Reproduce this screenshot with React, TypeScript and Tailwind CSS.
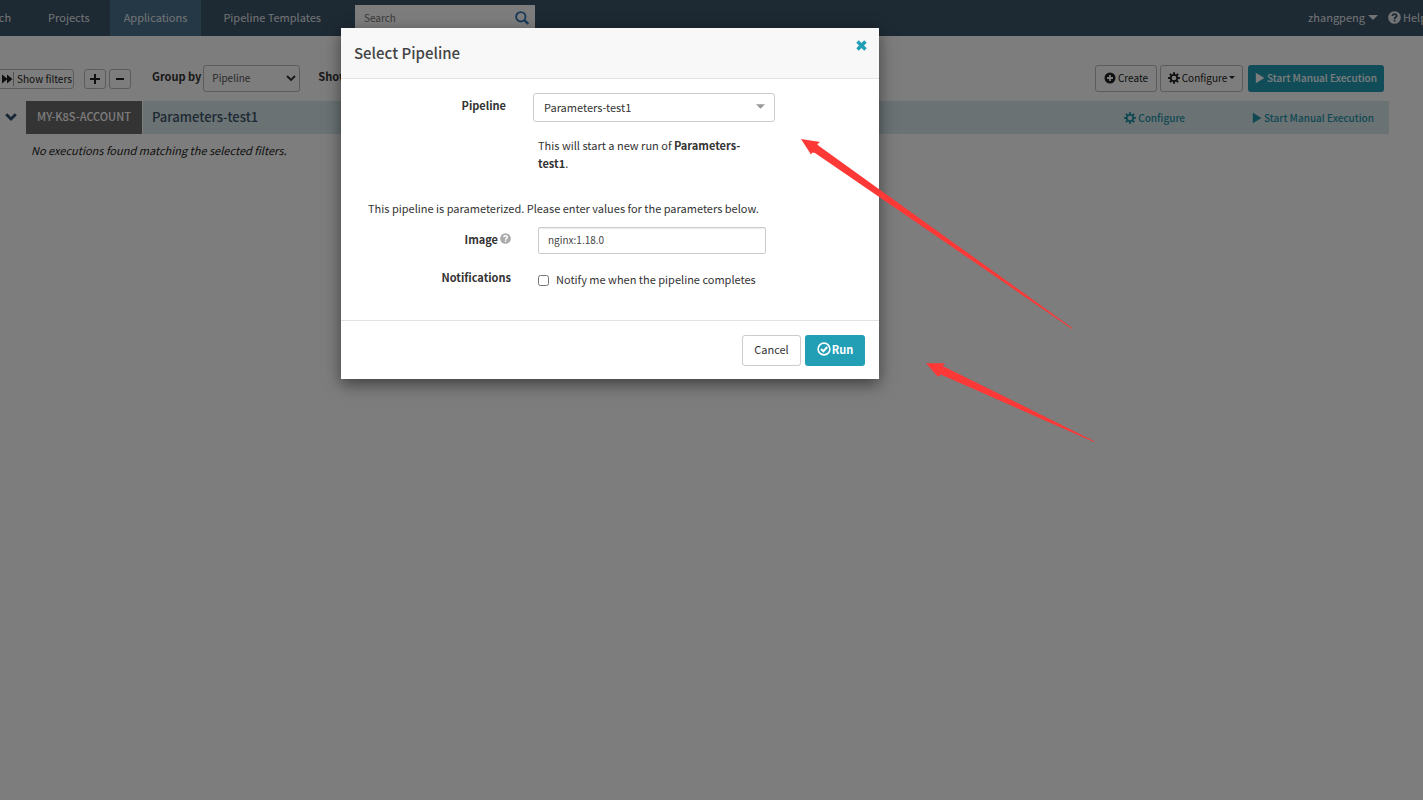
import type { ReactNode } from "react";

type IconProps = { className?: string };

const Play = ({ className }: IconProps) => (
  <svg viewBox="0 0 10 12" className={className} fill="currentColor" aria-hidden="true">
    <path d="M.8.8 9.400 6 .8 11.200z" />
  </svg>
);

const Caret = ({ className }: IconProps) => (
  <svg viewBox="0 0 10 5" className={className} fill="currentColor" aria-hidden="true">
    <path d="M0 0h10L5 5z" />
  </svg>
);

const Cog = ({ className }: IconProps) => (
  <svg viewBox="-8 -8 16 16" className={className} fill="none" stroke="currentColor" aria-hidden="true">
    <circle r="4.300" strokeWidth="2.300" />
    <path
      strokeWidth="2.600"
      d="M0-7.8v2.6M0 7.8V5.2M-7.8 0h2.6M7.8 0H5.2M-5.5-5.5l1.8 1.8M5.5 5.5 3.7 3.7M5.5-5.5 3.7-3.7M-5.5 5.5l1.8-1.8"
    />
  </svg>
);

const Forward = ({ className }: IconProps) => (
  <svg viewBox="0 0 12 14" className={className} fill="currentColor" aria-hidden="true">
    <path d="M0 2.500 5 6.400V2.500L10.500 7 5 11.500V7.600L0 11.500z" />
    <path d="M11 0h.8v14H11z" opacity=".5" />
  </svg>
);

const Plus = ({ className }: IconProps) => (
  <svg viewBox="0 0 10 10" className={className} fill="currentColor" aria-hidden="true">
    <path d="M4 0h2v4h4v2H6v4H4V6H0V4h4z" />
  </svg>
);

const Minus = ({ className }: IconProps) => (
  <svg viewBox="0 0 10 10" className={className} fill="currentColor" aria-hidden="true">
    <path d="M1 4h8v2H1z" />
  </svg>
);

const PlusCircle = ({ className }: IconProps) => (
  <svg viewBox="0 0 12 12" className={className} fill="currentColor" aria-hidden="true">
    <path
      fillRule="evenodd"
      d="M6 .5a5.5 5.5 0 1 1 0 11 5.5 5.5 0 0 1 0-11zM5.100 3v2.100H3v1.800h2.100V9h1.800V6.900H9V5.100H6.900V3z"
    />
  </svg>
);

const Question = ({ className, mark }: IconProps & { mark: string }) => (
  <svg viewBox="0 0 14 14" className={className} aria-hidden="true">
    <circle cx="7" cy="7" r="6.800" fill="currentColor" />
    <path
      d="M4.700 5.400C4.800 4.100 5.800 3.400 7 3.400s2.300.7 2.300 1.900C9.300 6.800 7.100 6.700 7.100 8.500"
      fill="none"
      stroke={mark}
      strokeWidth="1.900"
    />
    <path d="M6.100 9.400h2v1.800h-2z" fill={mark} />
  </svg>
);

const Magnifier = ({ className }: IconProps) => (
  <svg viewBox="0 0 14 14" className={className} fill="none" stroke="currentColor" aria-hidden="true">
    <circle cx="5.800" cy="5.800" r="4.700" strokeWidth="1.900" />
    <path d="m9.200 9.200 4 3.800" strokeWidth="2.400" />
  </svg>
);

const Chevron = ({ className }: IconProps) => (
  <svg viewBox="0 0 12 8" className={className} fill="none" stroke="currentColor" aria-hidden="true">
    <path d="m1.200 1.200 4.800 4.800 4.800-4.800" strokeWidth="2.800" />
  </svg>
);

const ThinChevron = ({ className }: IconProps) => (
  <svg viewBox="0 0 10 7" className={className} fill="none" stroke="currentColor" aria-hidden="true">
    <path d="m1 1 4 4 4-4" strokeWidth="1.900" />
  </svg>
);

const Remove = ({ className }: IconProps) => (
  <svg viewBox="0 0 12 12" className={className} fill="currentColor" aria-hidden="true">
    <path d="M3 .3 6 3.300 9 .3 11.700 3 8.700 6l3 3L9 11.700l-3-3-3 3L.3 9l3-3-3-3z" />
  </svg>
);

const CheckCircle = ({ className }: IconProps) => (
  <svg viewBox="0 0 14 14" className={className} fill="none" stroke="currentColor" aria-hidden="true">
    <circle cx="7" cy="7" r="5.900" strokeWidth="1.600" />
    <path d="m4 7 2.300 2.300 4-4.300" strokeWidth="2" />
  </svg>
);

const NavLink = ({ children, className }: { children: ReactNode; className: string }) => (
  <a href="#" className={`flex h-full items-center whitespace-nowrap pb-0.5 ${className}`}>
    {children}
  </a>
);

function TopBar() {
  return (
    <header className="flex h-9 items-center bg-[#3c5468] text-[11px] text-[#e6eaee]">
      <nav className="-ml-6 flex h-full">
        <NavLink className="pr-[23px]">Search</NavLink>
        <NavLink className="px-3.5">Projects</NavLink>
        <NavLink className="ml-1.5 bg-[#4b7390] px-3.5">Applications</NavLink>
        <NavLink className="ml-2 px-3.5">Pipeline Templates</NavLink>
      </nav>
      <div className="ml-5 flex h-[26px] w-[180px] items-center bg-white pl-[9px] pr-1.5">
        <input
          aria-label="Search"
          placeholder="Search"
          className="min-w-0 flex-1 bg-transparent pb-0.5 text-[10px] text-[#444] outline-none placeholder:text-[#777]"
        />
        <Magnifier className="size-3.5 text-[#3079b8]" />
      </div>
      <div className="-mr-1 ml-auto flex items-center pb-0.5">
        <button className="flex items-center gap-[3px]">
          zhangpeng <Caret className="h-[5px] w-2.5" />
        </button>
        <a href="#" className="ml-2.5 flex items-center gap-0.5">
          <Question className="size-[13px]" mark="#3c5468" /> Help
        </a>
      </div>
    </header>
  );
}

function Toolbar() {
  const button = "flex items-center justify-center rounded-[3px] border border-[#bbb] text-[#222]";
  return (
    <div className="flex items-center pr-[39px] pt-[29px] text-[10px]">
      <button className={`${button} -ml-1 h-5 w-[78px] gap-[3px] pl-1`}>
        <Forward className="h-3.5 w-3 shrink-0" /> <span className="whitespace-nowrap">Show filters</span>
      </button>
      <button aria-label="Expand all" className={`${button} ml-2.5 h-5 w-[22px]`}>
        <Plus className="size-2.5" />
      </button>
      <button aria-label="Collapse all" className={`${button} ml-[3px] h-5 w-[22px]`}>
        <Minus className="size-2.5" />
      </button>
      <label htmlFor="group" className="ml-[21px] pb-1 text-[11px] font-bold text-[#333]">
        Group by
      </label>
      <div className="relative ml-0.5">
        <select
          id="group"
          className="h-[27px] w-[97px] appearance-none rounded-[3px] border border-[#bbb] pb-0.5 pl-2 text-[10px] text-[#555]"
        >
          <option>Pipeline</option>
        </select>
        <ThinChevron className="pointer-events-none absolute right-1 top-2.5 h-[7px] w-2.5 text-[#333]" />
      </div>
      <span className="ml-[18px] pb-1 text-[11px] font-bold text-[#333]">Show</span>
      <div className="ml-auto flex items-center">
        <button className={`${button} h-[27px] w-[62px] gap-0.5 pb-0.5`}>
          <PlusCircle className="size-3" /> Create
        </button>
        <button className={`${button} ml-[3px] h-[27px] w-[83px] gap-0.5 pb-0.5`}>
          <Cog className="size-3" /> Configure <Caret className="h-[3px] w-1.5" />
        </button>
        <button className="ml-[5px] flex h-[27px] w-[136px] items-center justify-center gap-0.5 rounded-[3px] bg-[#229eb5] pb-0.5 font-medium text-white">
          <Play className="h-3 w-2.5" /> Start Manual Execution
        </button>
      </div>
    </div>
  );
}

function ExecutionGroup() {
  return (
    <section className="pt-[9px]">
      <div className="flex items-center pr-[34px]">
        <button aria-label="Toggle group" className="flex w-[26px] pb-0.5 pl-[5px]">
          <Chevron className="h-2 w-3 text-[#2f4f6b]" />
        </button>
        <span className="flex h-[33px] w-[116px] items-center justify-center bg-[#6a6a6a] pb-0.5 text-[11px] font-medium text-white">
          MY-K8S-ACCOUNT
        </span>
        <div className="ml-px flex h-[33px] flex-1 items-center bg-[#d8e8ed] pl-[9px] pr-[15px] text-[10px] font-medium text-[#1f94aa]">
          <h2 className="pb-0.5 text-[13px] font-medium text-[#3c5468]">Parameters-test1</h2>
          <a href="#" className="ml-auto flex items-center gap-0.5">
            <Cog className="size-3" /> Configure
          </a>
          <a href="#" className="ml-[67px] flex items-center gap-0.5">
            <Play className="h-3 w-2.5" /> Start Manual Execution
          </a>
        </div>
      </div>
      <p className="pl-[31px] pt-[7px] text-[11px] leading-[18px] italic text-[#222]">
        No executions found matching the selected filters.
      </p>
    </section>
  );
}

function PipelineDialog() {
  return (
    <form
      role="dialog"
      aria-labelledby="dialog-title"
      className="absolute left-[341px] top-7 w-[538px] bg-white text-[11px] leading-[18px] text-[#333] shadow-[0_5px_15px_rgba(0,0,0,0.5)]"
    >
      <div className="flex h-[51px] items-center border-b border-[#e2e2e2] bg-[#f8f8f8] pl-[13px] pr-3">
        <h1 id="dialog-title" className="text-[15px] font-medium text-[#444]">
          Select Pipeline
        </h1>
        <button type="button" aria-label="Close" className="ml-auto self-start pt-3 text-[#229eb5]">
          <Remove className="size-[11px]" />
        </button>
      </div>
      <div className="h-[241px] pt-3.5">
        <div className="flex">
          <label htmlFor="pipeline" className="w-[165px] pt-[3px] text-right font-bold">
            Pipeline
          </label>
          <div className="relative ml-[27px]">
            <select
              id="pipeline"
              className="h-[29px] w-[242px] appearance-none rounded-[3px] border border-[#ccc] pb-0.5 pl-2.5"
            >
              <option>Parameters-test1</option>
            </select>
            <Caret className="pointer-events-none absolute right-2.5 top-[11px] h-[5px] w-[9px] text-[#999]" />
          </div>
        </div>
        <p className="ml-[197px] mt-3.5 w-[228px]">
          This will start a new run of <b>Parameters-test1</b>.
        </p>
        <p className="ml-[27px] mt-[27px]">
          This pipeline is parameterized. Please enter values for the parameters below.
        </p>
        <div className="mt-2.5 flex">
          <label htmlFor="image" className="flex w-[170px] items-start justify-end gap-0.5 pt-[3px] font-bold">
            Image <Question className="mt-[3px] size-[11px] text-[#aaa]" mark="#ffffff" />
          </label>
          <input
            id="image"
            defaultValue="nginx:1.18.0"
            className="ml-[27px] h-[27px] w-[228px] rounded-[2px] border border-[#ccc] px-[9px] pb-0.5 text-[10px] text-[#444] shadow-[inset_0_1px_1px_rgba(0,0,0,0.08)]"
          />
        </div>
        <div className="mt-3.5 flex">
          <span className="w-[170px] text-right font-bold">Notifications</span>
          <label className="ml-[27px] flex items-center gap-[7px] pt-0.5">
            <input type="checkbox" className="mt-0.5 size-[11px]" />
            Notify me when the pipeline completes
          </label>
        </div>
      </div>
      <div className="flex justify-end gap-1 border-t border-[#e2e2e2] px-3.5 pb-[13px] pt-3.5">
        <button type="button" className="h-[31px] w-[59px] rounded-[3px] border border-[#ccc] pb-1">
          Cancel
        </button>
        <button
          type="submit"
          className="flex h-[31px] w-[60px] items-center justify-center gap-px rounded-[3px] bg-[#229eb5] pb-[3px] font-bold text-white"
        >
          <CheckCircle className="size-3.5" /> Run
        </button>
      </div>
    </form>
  );
}

export default function App() {
  return (
    <div className="relative min-h-screen overflow-hidden bg-white font-['Noto_Sans_CJK_SC',sans-serif]">
      <TopBar />
      <Toolbar />
      <ExecutionGroup />
      <div className="absolute inset-0 bg-black/51" />
      <PipelineDialog />
      <svg
        viewBox="0 0 300 310"
        className="pointer-events-none absolute left-[800px] top-[135px] h-[310px] w-[300px] fill-[#fc3937]"
        aria-hidden="true"
      >
        <path d="M1 4 20 7 17.300 9.300 19 11 272.500 193.200 272 194 15 18 12.500 17.500 11 19.500z" />
        <path d="M126 228.300 145 228.300 142.700 231 294.300 306.200 294 307 140.700 239.500 138 242z" />
      </svg>
    </div>
  );
}
